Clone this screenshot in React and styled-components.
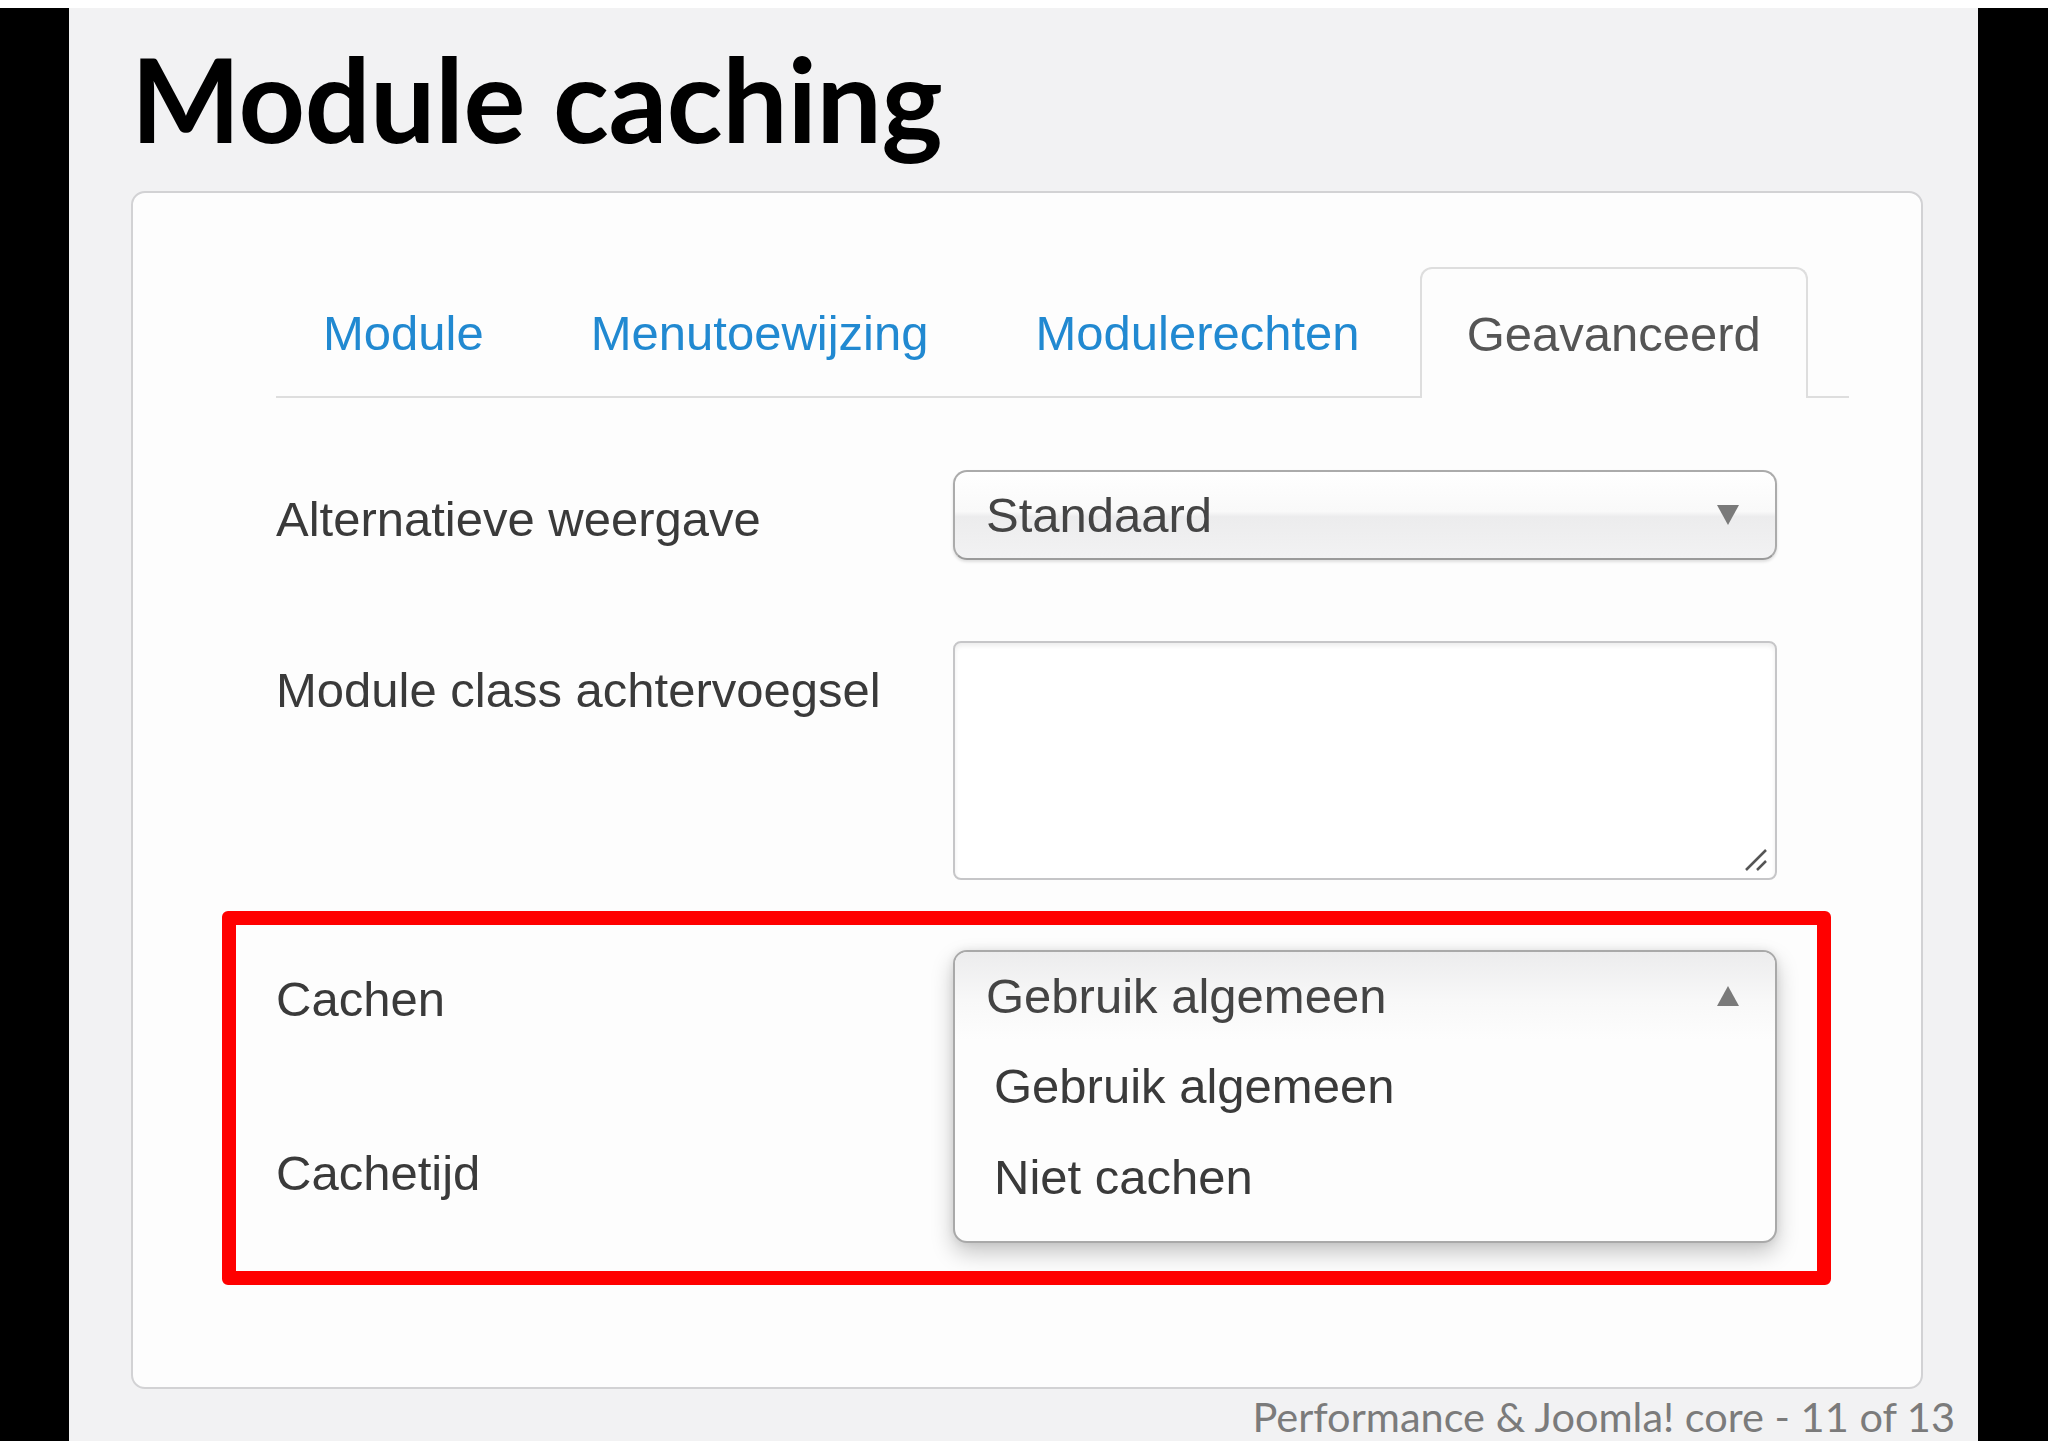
import styled, { createGlobalStyle } from 'styled-components';

const GlobalStyle = createGlobalStyle`
  html, body {
    margin: 0;
    padding: 0;
    background: #ffffff;
  }
  * {
    box-sizing: border-box;
  }
`;

const Screen = styled.div`
  width: 2048px;
  height: 1448px;
  padding: 8px 0 7px;
  background: #ffffff;
`;

const Frame = styled.div`
  display: flex;
  height: 100%;
`;

const SideBar = styled.div`
  width: ${(p) => p.$w}px;
  background: #000;
`;

const Slide = styled.main`
  flex: 1;
  display: flex;
  flex-direction: column;
  background: #f2f2f3;
  padding: 33px 23px 0 62px;
`;

const Title = styled.h1`
  margin: 0;
  font-family: Lato, 'Liberation Sans', sans-serif;
  font-weight: 700;
  font-size: 116px;
  line-height: 116px;
  color: #000;
  letter-spacing: -0.4px;
`;

const Card = styled.section`
  margin-top: 34px;
  width: 1792px;
  background: #fdfdfd;
  border: 2px solid #d2d2d4;
  border-radius: 14px;
  padding: 74px 72px 102px 143px;
  font-family: 'Liberation Sans', Arial, sans-serif;
  font-size: 49px;
`;

const TabList = styled.nav`
  display: flex;
  height: 131px;
  border-bottom: 2px solid #dedede;
`;

const Tab = styled.div`
  display: flex;
  align-items: center;
  height: ${(p) => (p.$active ? 131 : 129)}px;
  padding: 0 45px;
  margin-right: 13px;
  border: 2px solid ${(p) => (p.$active ? '#dedede' : 'transparent')};
  border-bottom: none;
  border-radius: 12px 12px 0 0;
  background: ${(p) => (p.$active ? '#fdfdfd' : 'transparent')};
  color: ${(p) => (p.$active ? '#555555' : '#2189d1')};
  line-height: 58px;
  white-space: nowrap;
`;

const Form = styled.div`
  margin-top: 72px;
  display: flex;
  flex-direction: column;
`;

const Row = styled.div`
  display: flex;
  align-items: flex-start;
  margin-top: ${(p) => p.$gap || 0}px;
`;

const Label = styled.div`
  width: 677px;
  padding-top: 20px;
  line-height: 58px;
  color: #3a3a3a;
  white-space: nowrap;
`;

const Select = styled.div`
  width: 824px;
  height: 90px;
  display: flex;
  align-items: center;
  justify-content: space-between;
  padding: 0 36px 0 31px;
  border: 2px solid #ababab;
  border-bottom-color: #9a9a9a;
  border-radius: 14px;
  background: linear-gradient(
    to bottom,
    #ffffff 0%,
    #f9f9f9 46%,
    #ececed 52%,
    #f2f2f3 100%
  );
  box-shadow: 0 2px 3px rgba(0, 0, 0, 0.12);
  color: #444;
  line-height: 58px;
`;

const TextArea = styled.div`
  position: relative;
  width: 824px;
  height: 239px;
  border: 2px solid #c6c6c8;
  border-radius: 8px;
  background: #ffffff;
  box-shadow: inset 0 3px 4px rgba(0, 0, 0, 0.07);
`;

const Grip = styled.svg`
  position: absolute;
  right: 6px;
  bottom: 5px;
`;

const Highlight = styled.div`
  margin-top: 31px;
  margin-left: -54px;
  width: 1609px;
  display: flex;
  align-items: flex-start;
  border: 14px solid #ff0000;
  border-radius: 6px;
  padding: 25px 40px 28px;
`;

const LabelStack = styled.div`
  display: flex;
  flex-direction: column;
  gap: 96px;
`;

const Dropdown = styled.div`
  width: 824px;
  border: 2px solid #a9a9a9;
  border-radius: 14px;
  background: #fdfdfd;
  box-shadow: 0 10px 22px rgba(0, 0, 0, 0.22), 0 0 8px rgba(0, 0, 0, 0.08);
  padding-bottom: 19px;
  overflow: hidden;
`;

const DropdownHead = styled.div`
  height: 88px;
  display: flex;
  align-items: center;
  justify-content: space-between;
  padding: 0 36px 0 31px;
  background: linear-gradient(to bottom, #ececed 0%, #f8f8f8 55%, #fdfdfd 100%);
  color: #444;
  line-height: 58px;
`;

const Option = styled.div`
  height: 91px;
  display: flex;
  align-items: center;
  padding-left: 39px;
  color: #3a3a3a;
  line-height: 58px;
`;

const Footer = styled.div`
  margin-top: 3px;
  text-align: right;
  font-family: Lato, 'Liberation Sans', sans-serif;
  font-size: 41.5px;
  line-height: 48px;
  color: #7b7b7b;
`;

const Arrow = ({ up }) => (
  <svg width="22" height="20" viewBox="0 0 22 20">
    <polygon points={up ? '11,0 22,20 0,20' : '0,0 22,0 11,20'} fill="#7a7a7a" />
  </svg>
);

const tabs = ['Module', 'Menutoewijzing', 'Modulerechten', 'Geavanceerd'];

export default function App() {
  return (
    <>
      <GlobalStyle />
      <Screen>
        <Frame>
          <SideBar $w={69} />
          <Slide>
            <Title>Module caching</Title>
            <Card>
              <TabList>
                {tabs.map((t) => (
                  <Tab key={t} $active={t === 'Geavanceerd'}>
                    {t}
                  </Tab>
                ))}
              </TabList>
              <Form>
                <Row>
                  <Label>Alternatieve weergave</Label>
                  <Select>
                    <span>Standaard</span>
                    <Arrow />
                  </Select>
                </Row>
                <Row $gap={81}>
                  <Label>Module class achtervoegsel</Label>
                  <TextArea>
                    <Grip width="26" height="26" viewBox="0 0 26 26">
                      <line x1="3" y1="23" x2="23" y2="3" stroke="#555" strokeWidth="2.5" />
                      <line x1="14" y1="23" x2="23" y2="14" stroke="#555" strokeWidth="2.5" />
                    </Grip>
                  </TextArea>
                </Row>
                <Highlight>
                  <LabelStack>
                    <Label>Cachen</Label>
                    <Label>Cachetijd</Label>
                  </LabelStack>
                  <Dropdown>
                    <DropdownHead>
                      <span>Gebruik algemeen</span>
                      <Arrow up />
                    </DropdownHead>
                    <Option>Gebruik algemeen</Option>
                    <Option>Niet cachen</Option>
                  </Dropdown>
                </Highlight>
              </Form>
            </Card>
            <Footer>Performance &amp; Joomla! core - 11 of 13</Footer>
          </Slide>
          <SideBar $w={70} />
        </Frame>
      </Screen>
    </>
  );
}
